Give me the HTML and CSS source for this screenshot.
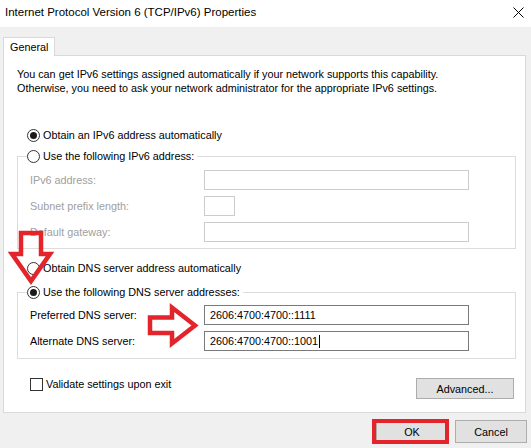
FILE: index.html
```html
<!DOCTYPE html>
<html>
<head>
<meta charset="utf-8">
<link rel="stylesheet" href="styles.css">
</head>
<body>
<div class="dialog">
  <div class="titlebar">
    <span class="title">Internet Protocol Version 6 (TCP/IPv6) Properties</span>
    <svg class="close" width="11" height="11" viewBox="0 0 11 11"><path d="M0.5 0.5 L10.5 10.5 M10.5 0.5 L0.5 10.5" stroke="#000" stroke-width="1" fill="none"/></svg>
  </div>
  <div class="tabs"><div class="tab">General</div></div>
  <div class="panel">
    <p class="intro">You can get IPv6 settings assigned automatically if your network supports this capability.<br>Otherwise, you need to ask your network administrator for the appropriate IPv6 settings.</p>

    <div class="radio-row first"><span class="radio checked"></span><span>Obtain an IPv6 address automatically</span></div>

    <div class="group g1">
      <div class="legend"><span class="radio"></span><span>Use the following IPv6 address:</span></div>
      <div class="fields disabled">
        <span class="label">IPv6 address:</span><div class="field wide"></div>
        <span class="label">Subnet prefix length:</span><div class="field small"></div>
        <span class="label">Default gateway:</span><div class="field wide"></div>
      </div>
    </div>

    <div class="radio-row dns"><span class="radio"></span><span>Obtain DNS server address automatically</span></div>

    <div class="group g2">
      <div class="legend"><span class="radio checked"></span><span>Use the following DNS server addresses:</span></div>
      <div class="fields">
        <span class="label">Preferred DNS server:</span><div class="field wide active">2606:4700:4700::1111</div>
        <span class="label">Alternate DNS server:</span><div class="field wide active">2606:4700:4700::1001<span class="caret"></span></div>
      </div>
    </div>

    <div class="bottom-row">
      <div class="check-row"><span class="checkbox"></span><span>Validate settings upon exit</span></div>
      <div class="button advanced">Advanced...</div>
    </div>
  </div>
  <div class="actions">
    <div class="button ok">OK</div>
    <div class="button cancel">Cancel</div>
  </div>

  <svg class="arrow-down" width="60" height="70" viewBox="0 0 60 70">
    <polygon points="21,5 41,5 41,26 50,26 31,53 12,26 21,26" fill="none" stroke="#e3242b" stroke-width="4.5" stroke-linejoin="miter"/>
  </svg>
  <svg class="arrow-right" width="70" height="50" viewBox="0 0 70 50">
    <polygon points="8,15.5 30,15.5 30,5.5 53,23.5 30,41.5 30,31 8,31" fill="none" stroke="#e3242b" stroke-width="4.5" stroke-linejoin="miter"/>
  </svg>
</div>
</body>
</html>
```
FILE: styles.css
```css
html, body {
  margin: 0;
  padding: 0;
}
body {
  width: 531px;
  height: 448px;
  overflow: hidden;
  background: #f0f0f0;
  font-family: "Liberation Sans", Arial, sans-serif;
  font-size: 10.8px;
  color: #000;
}
.dialog {
  position: relative;
  width: 531px;
  height: 448px;
}
.titlebar {
  height: 27px;
  background: #fff;
  display: flex;
  align-items: center;
  justify-content: space-between;
  padding: 0 7px 3px 5px;
  box-sizing: border-box;
}
.title {
  font-size: 11.5px;
}
.close {
  display: block;
}
.tabs {
  display: flex;
  padding-left: 3px;
  margin-top: 10px;
}
.tab {
  position: relative;
  z-index: 1;
  height: 19px;
  box-sizing: border-box;
  margin-bottom: -1px;
  padding: 0 6px;
  background: #fff;
  border: 1px solid #d9d9d9;
  border-bottom: none;
  display: flex;
  align-items: center;
}
.panel {
  margin-left: 3px;
  width: 523px;
  box-sizing: border-box;
  background: #fff;
  border: 1px solid #d9d9d9;
  padding-bottom: 13px;
}
.intro {
  margin: 11px 0 0 13px;
  line-height: 14px;
}
.radio-row, .legend, .check-row {
  display: flex;
  align-items: center;
  gap: 3px;
  height: 14px;
}
.radio-row {
  margin-left: 23px;
}
.radio-row.first {
  margin-top: 33px;
}
.radio-row.dns {
  margin-top: 12px;
}
.radio {
  width: 13px;
  height: 13px;
  box-sizing: border-box;
  border: 1px solid #333;
  border-radius: 50%;
  background: #fff;
  position: relative;
  flex: none;
}
.radio.checked::after {
  content: "";
  position: absolute;
  left: 2px;
  top: 2px;
  width: 7px;
  height: 7px;
  border-radius: 50%;
  background: #1a1a1a;
}
.group {
  margin: 0 9px 0 13px;
  border: 1px solid #dcdcdc;
  padding: 0 0 6px 12px;
}
.group.g1 {
  margin-top: 14px;
}
.group.g2 {
  margin-top: 17px;
  padding-bottom: 7px;
}
.legend {
  margin: -8px 0 0 -3px;
  width: max-content;
  background: #fff;
  padding-right: 3px;
}
.fields {
  display: grid;
  grid-template-columns: 174px 265px;
  row-gap: 6px;
  align-items: center;
}
.g1 .fields {
  margin-top: 7px;
}
.g2 .fields {
  margin-top: 6px;
}
.fields.disabled .label {
  color: #a0a0a0;
}
.field {
  height: 20px;
  box-sizing: border-box;
  border: 1px solid #cccccc;
  background: #fff;
  display: flex;
  align-items: center;
  padding-left: 5px;
}
.field.wide {
  width: 265px;
}
.field.small {
  width: 31px;
}
.field.active {
  border-color: #7a7a7a;
}
.caret {
  display: inline-block;
  width: 1px;
  height: 13px;
  background: #000;
  margin-left: 1px;
}
.bottom-row {
  display: flex;
  justify-content: space-between;
  align-items: flex-start;
  margin: 19px 11px 0 26px;
}
.check-row {
  margin-top: -1px;
}
.checkbox {
  width: 13px;
  height: 13px;
  box-sizing: border-box;
  border: 1px solid #333;
  background: #fff;
  flex: none;
}
.button {
  box-sizing: border-box;
  background: #e1e1e1;
  border: 1px solid #adadad;
  display: flex;
  align-items: center;
  justify-content: center;
}
.advanced {
  width: 98px;
  height: 21px;
}
.actions {
  display: flex;
  justify-content: flex-end;
  gap: 7px;
  margin-top: 7px;
  padding-right: 4px;
}
.actions .button {
  width: 72px;
  height: 23px;
}
.ok {
  position: relative;
}
.ok::after {
  content: "";
  position: absolute;
  left: -5px;
  top: -2px;
  width: 77px;
  height: 25px;
  box-sizing: border-box;
  border: 4px solid #e3242b;
}
.arrow-down {
  position: absolute;
  left: 0;
  top: 228px;
}
.arrow-right {
  position: absolute;
  left: 142px;
  top: 302px;
}
```
